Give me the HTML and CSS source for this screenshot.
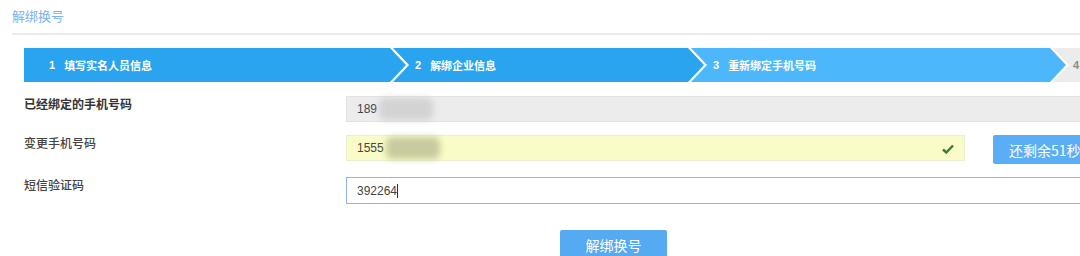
FILE: index.html
```html
<!DOCTYPE html>
<html lang="zh-CN">

<head>
    <meta charset="UTF-8">
    <meta name="viewport" content="width=device-width, initial-scale=1.0">
    <title>解绑换号</title>
    <link rel="stylesheet" href="styles.css">
</head>

<body>
    <header class="page-head">
        <h1>解绑换号</h1>
    </header>

    <nav class="steps">
        <div class="step step-first done"><span>1</span>填写实名人员信息</div>
        <div class="step done"><span>2</span>解绑企业信息</div>
        <div class="step current"><span>3</span>重新绑定手机号码</div>
        <div class="step todo"><span>4</span></div>
    </nav>

    <section class="form">
        <div class="row">
            <label class="strong">已经绑定的手机号码</label>
            <div class="field field-old">189<i class="mask"></i></div>
        </div>
        <div class="row">
            <label>变更手机号码</label>
            <div class="field field-ok">1555<i class="mask mask-ok"></i>
                <svg class="tick" viewBox="0 0 12 10" width="12" height="10">
                    <path d="M1 5.5 L4.3 8.5 L11 1.5" fill="none" stroke="#3a7a3e" stroke-width="2.4" />
                </svg>
            </div>
            <button class="btn btn-count">还剩余51秒</button>
        </div>
        <div class="row">
            <label>短信验证码</label>
            <div class="field field-focus">392264<b class="caret"></b></div>
        </div>
    </section>

    <div class="actions">
        <button class="btn btn-submit">解绑换号</button>
    </div>
</body>

</html>
```

FILE: styles.css
```css
* {
    box-sizing: border-box;
    margin: 0;
    padding: 0;
}

body {
    width: 1080px;
    height: 256px;
    overflow: hidden;
    background: #fff;
    font-family: "Liberation Sans", "Noto Sans CJK SC", Arial, sans-serif;
    font-size: 12px;
    color: #333;
}

.page-head {
    margin-left: 12px;
    height: 35px;
    border-bottom: 2px solid #ebebeb;
}

.page-head h1 {
    font-size: 13px;
    font-weight: normal;
    color: #7cb0ec;
    line-height: 34px;
}

.steps {
    display: flex;
    margin: 13px 0 0 24px;
    height: 34px;
}

.step {
    flex: none;
    display: flex;
    align-items: center;
    height: 34px;
    padding-left: 22px;
    margin-left: -13px;
    color: #fff;
    font-size: 11px;
    font-weight: bold;
    clip-path: polygon(0 0, calc(100% - 16px) 0, 100% 50%, calc(100% - 16px) 100%, 0 100%, 16px 50%);
}

.step span {
    margin-right: 9px;
}

.step-first {
    margin-left: 0;
    padding-left: 25px;
    width: 382px;
    clip-path: polygon(0 0, calc(100% - 16px) 0, 100% 50%, calc(100% - 16px) 100%, 0 100%);
}

.done {
    background: #2ba4ef;
}

.step.done:nth-child(2) {
    width: 311px;
}

.current {
    width: 375px;
    background: #4cb8fb;
}

.todo {
    width: 40px;
    background: #ececec;
    color: #8a8a8a;
    padding-left: 20px;
    clip-path: polygon(0 0, 100% 0, 100% 100%, 0 100%, 16px 50%);
}

.todo span {
    margin-right: 0;
}

.form {
    margin-top: 14px;
}

.row {
    display: flex;
    align-items: flex-start;
    margin-bottom: 13px;
}

.row label {
    flex: none;
    width: 346px;
    padding-left: 24px;
    line-height: 18px;
    font-weight: 500;
    color: #444;
}

.row label.strong {
    font-weight: bold;
    color: #333;
}

.field {
    flex: none;
    position: relative;
    display: flex;
    align-items: center;
    height: 26px;
    padding-left: 10px;
    font-size: 12px;
    color: #444;
    border: 1px solid #e2e2e2;
}

.field-old {
    width: 750px;
    background: #ececec;
}

.field-ok {
    width: 619px;
    background: #f9fcc6;
    border-color: #ecefcf;
}

.field-focus {
    width: 750px;
    height: 27px;
    border-color: #8db6ef;
    background: #fff;
}

.mask {
    display: block;
    width: 54px;
    height: 22px;
    margin-left: 2px;
    background: #d3d3d3;
    border-radius: 6px;
    filter: blur(3px);
}

.mask-ok {
    background: #c8cb9f;
}

.tick {
    position: absolute;
    right: 10px;
    top: 8px;
}

.caret {
    display: block;
    width: 1px;
    height: 14px;
    background: #333;
}

.btn {
    border: 0;
    color: #fff;
    font-family: "Noto Sans CJK SC", "Liberation Sans", sans-serif;
    font-size: 14px;
    cursor: pointer;
}

.btn-count {
    flex: none;
    width: 110px;
    height: 29px;
    margin-left: 28px;
    padding-left: 16px;
    text-align: left;
    background: #5aaef5;
    border-radius: 2px;
}

.actions {
    padding-top: 13px;
    padding-left: 560px;
}

.btn-submit {
    width: 107px;
    height: 30px;
    background: #56aaf1;
    border-radius: 2px;
}
```
